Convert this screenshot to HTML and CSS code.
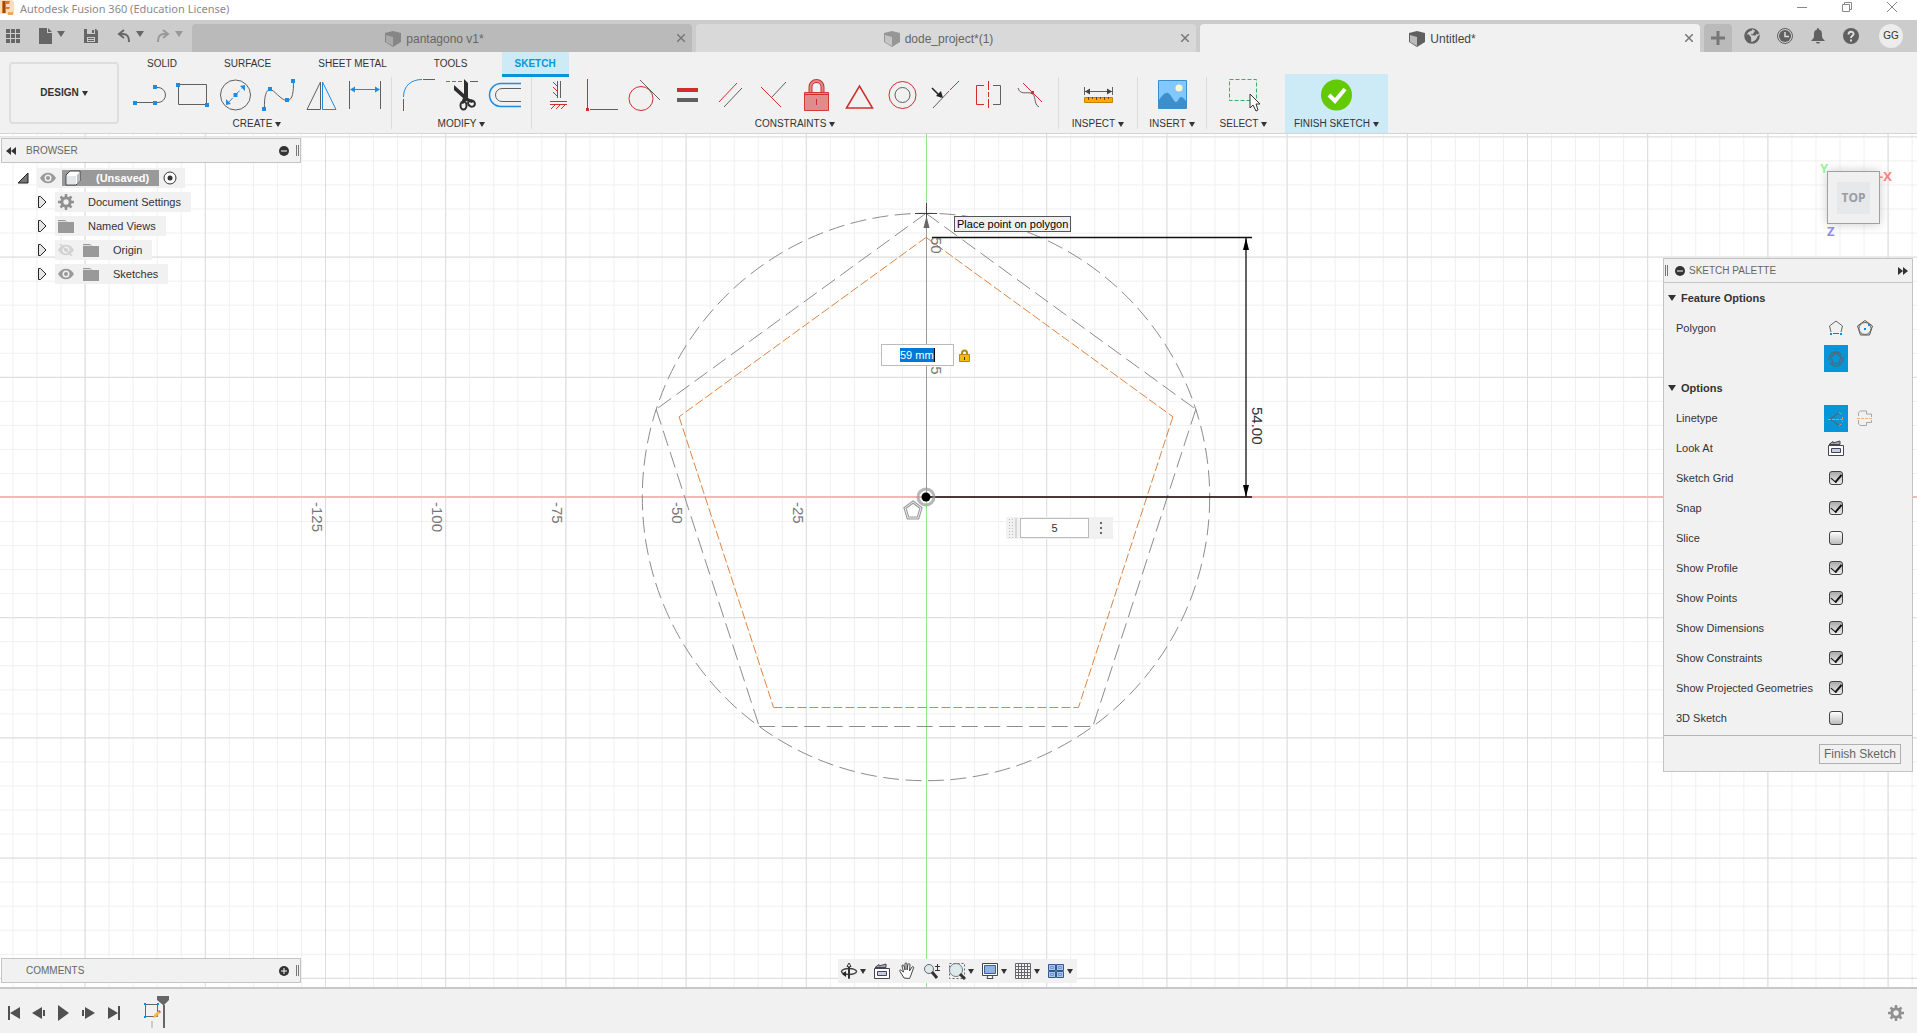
FILE: index.html
```html
<!DOCTYPE html>
<html lang="en">
<head>
<meta charset="utf-8">
<title>Autodesk Fusion 360 (Education License)</title>
<link rel="stylesheet" href="styles.css">
</head>
<body>
<div class="app">
  <header class="titlebar">
    <svg class="app-logo" viewBox="0 0 16 16" width="16" height="16"><path fill="#f8dcc0" d="M0 0h12l2 2v12H0z"/><path fill="#e07b1a" d="M2 1h8l-1 3H6v3h4l-1 2H6v4H2z"/><path fill="#9c4a0c" d="M3 1h2v12H3z"/><path fill="#f0a860" d="M8 12h5v3H8z"/></svg>
    <h1 class="app-title">Autodesk Fusion 360 (Education License)</h1>
    <div class="window-controls">
      <button type="button" aria-label="Minimize"><svg viewBox="0 0 12 12" width="12" height="12"><path class="wc" d="M1 6.500h10"/></svg></button>
      <button type="button" aria-label="Restore"><svg viewBox="0 0 12 12" width="12" height="12"><path class="wc" d="M1.500 3.500h7v7h-7zM3.500 3V1.500h7v7H9"/></svg></button>
      <button type="button" aria-label="Close"><svg viewBox="0 0 12 12" width="12" height="12"><path class="wc" d="M1 1l10 10M11 1L1 11"/></svg></button>
    </div>
  </header>

  <nav class="tabbar">
    <div class="quick">
      <button type="button" aria-label="Data panel"><svg viewBox="0 0 14 14" width="14" height="14"><path fill="#666" d="M0 0h4v4H0zM5 0h4v4H5zM10 0h4v4h-4zM0 5h4v4H0zM5 5h4v4H5zM10 5h4v4h-4zM0 10h4v4H0zM5 10h4v4H5zM10 10h4v4h-4z"/></svg></button>
      <button type="button" class="with-caret" aria-label="File"><svg viewBox="0 0 13 16" width="13" height="16"><path fill="#666" d="M0 0h8v5h5v11H0zM9 0l4 4H9z"/></svg><i class="caret"></i></button>
      <button type="button" aria-label="Save"><svg viewBox="0 0 14 14" width="14" height="14"><path fill="#666" d="M0 0h12l2 2v12H0z"/><path fill="#ccc" d="M3 0h8v5H3zM3 8h8v5H3z"/><path fill="#666" d="M8 1h2v3H8zM4 9h6v1H4zM4 11h6v1H4z"/></svg></button>
      <button type="button" class="with-caret" aria-label="Undo"><svg viewBox="0 0 14 14" width="14" height="14"><path fill="none" stroke="#666" stroke-width="2" d="M7 1L2 5l5 4M2 5h4c5 0 6 3 6 8"/></svg><i class="caret"></i></button>
      <button type="button" class="with-caret faded" aria-label="Redo"><svg viewBox="0 0 14 14" width="14" height="14"><path fill="none" stroke="#666" stroke-width="2" d="M7 1l5 4-5 4M12 5H8C3 5 2 8 2 13"/></svg><i class="caret"></i></button>
    </div>
    <div class="doctabs">
      <div class="doctab dark"><span class="doc-name"><svg viewBox="0 0 16 16" width="16" height="16"><path fill="#868686" d="M0 2l8-2 8 2v9l-8 5-8-5z"/><path fill="#aaa" d="M1 4l7 2v9l-7-4z"/></svg>pantagono v1*</span><button type="button" aria-label="Close pantagono v1"><svg viewBox="0 0 8 8" width="8" height="8"><path class="x" d="M0 0l8 8M8 0L0 8"/></svg></button></div>
      <div class="doctab light"><span class="doc-name"><svg viewBox="0 0 16 16" width="16" height="16"><path fill="#969696" d="M0 2l8-2 8 2v9l-8 5-8-5z"/><path fill="#c4c4c4" d="M1 4l7 2v9l-7-4z"/></svg>dode_project*(1)</span><button type="button" aria-label="Close dode_project"><svg viewBox="0 0 8 8" width="8" height="8"><path class="x" d="M0 0l8 8M8 0L0 8"/></svg></button></div>
      <div class="doctab current"><span class="doc-name"><svg viewBox="0 0 16 16" width="16" height="16"><path fill="#606060" d="M0 2l8-2 8 2v9l-8 5-8-5z"/><path fill="#bbb" d="M1 4l7 2v9l-7-4z"/></svg>Untitled*</span><button type="button" aria-label="Close Untitled"><svg viewBox="0 0 8 8" width="8" height="8"><path class="x" d="M0 0l8 8M8 0L0 8"/></svg></button></div>
      <button type="button" class="newtab" aria-label="New tab"><svg viewBox="0 0 14 14" width="14" height="14"><path stroke="#777" stroke-width="3" d="M7 0v14M0 7h14"/></svg></button>
    </div>
    <div class="account">
      <button type="button" aria-label="Extensions"><svg viewBox="0 0 16 16" width="16" height="16"><circle cx="8" cy="8" r="6.500" fill="none" stroke="#606060" stroke-width="2.500"/><path fill="#606060" d="M1 9l3-3 3 2 1 6-4 1zM7 7l3-5 4 2-3 4z"/><path fill="none" stroke="#ccc" stroke-width="1.500" d="M8 14V9l-2-2M9 8l3 1 3-3M8 6l2-3-2-1"/></svg></button>
      <button type="button" aria-label="Job status"><svg viewBox="0 0 16 16" width="16" height="16"><circle cx="8" cy="8" r="7.500" fill="none" stroke="#606060"/><circle cx="8" cy="8" r="6" fill="#606060"/><path fill="none" stroke="#ddd" stroke-width="1.500" d="M8 4v4.500h4"/></svg></button>
      <button type="button" aria-label="Notifications"><svg viewBox="0 0 16 16" width="16" height="16"><path fill="#606060" d="M8 0c1 0 1 1 1 1.500 3 1 3 3 3 6s1 3 3 5.500H1c2-2.500 3-2.500 3-5.500s0-5 3-6C7 1 7 0 8 0zM6 14h4c0 2-4 2-4 0z"/></svg></button>
      <button type="button" aria-label="Help"><svg viewBox="0 0 16 16" width="16" height="16"><circle cx="8" cy="8" r="8" fill="#606060"/><path fill="none" stroke="#ddd" stroke-width="2" d="M5.500 6.500C5.500 3 10.500 3 10.500 6 10.500 8 8 7.500 8 10M8 11.500v2"/></svg></button>
      <button type="button" class="avatar">GG</button>
    </div>
  </nav>

  <section class="ribbon">
    <button type="button" class="design">DESIGN<i class="caret small"></i></button>
    <div class="ribbon-main">
      <div class="ribbon-tabs">
        <button type="button">SOLID</button>
        <button type="button">SURFACE</button>
        <button type="button">SHEET METAL</button>
        <button type="button">TOOLS</button>
        <button type="button" class="active">SKETCH</button>
      </div>
      <div class="groups">
        <div class="group">
          <div class="tools">
            <button type="button" aria-label="Line"><svg class="tool" viewBox="0 0 43 36"><path class="g" d="M7 25.500h20M27 10.500h3a7.500 7.500 0 0 1 0 15h-3"/><path class="bf" d="M5 24h4v4H5zM25 24h4v4h-4zM25 8h4v4h-4z"/></svg></button>
            <button type="button" aria-label="Rectangle"><svg class="tool" viewBox="0 0 43 36"><path class="g" d="M7.500 7.500h28v20h-28z"/><path class="bf" d="M5 6h4v4H5zM34 26h4v4h-4z"/></svg></button>
            <button type="button" aria-label="Circle"><svg class="tool" viewBox="0 0 43 36"><circle class="g" cx="21.500" cy="18" r="15"/><path class="b" stroke-dasharray="7 3" d="M14 26L29 10"/><path class="bf" d="M12 28v-6l5 5zM31 8v6l-5-5zM19.500 16h4v4h-4z"/></svg></button>
            <button type="button" aria-label="Spline"><svg class="tool" viewBox="0 0 43 36"><path class="g" d="M7.500 32C7 20 9 12.500 13 12.500S24 23.500 30 23.500s6.500-9 6.500-20"/><path class="bf" d="M5 30h4v4H5zM11 10h4v4h-4zM28 21h4v4h-4zM34 2h4v4h-4z"/></svg></button>
            <button type="button" aria-label="Mirror"><svg class="tool" viewBox="0 0 43 36"><path class="g" d="M7 32.500L20.500 5v27.500z"/><path class="b" d="M22.500 5L36 32.500H22.500z"/></svg></button>
            <button type="button" aria-label="Sketch dimension"><svg class="tool" viewBox="0 0 43 36"><path class="g" d="M6.500 4v28M37.500 4v28"/><path class="b" d="M8 12.500h28"/><path class="bf" d="M7 12.500l5-3v6zM37 12.500l-5-3v6z"/></svg></button>
          </div>
          <button type="button" class="group-label">CREATE<i class="caret small"></i></button>
        </div>
        <div class="group">
          <div class="tools">
            <button type="button" aria-label="Fillet"><svg class="tool" viewBox="0 0 43 36"><path class="g" d="M6.500 34V22M26 2.500h12"/><path class="b" d="M6.500 20C6.500 9 14 2.500 25 2.500"/></svg></button>
            <button type="button" aria-label="Trim"><svg class="tool" viewBox="0 0 43 36"><path class="b" stroke-dasharray="4 2" d="M6 4.500h17"/><path class="g" d="M30 4.500h8"/><path fill="#2e2e2e" d="M24 2l4 4v15l6 3-2 2-6-2-3 3-2-1 2-5-9-8V8l10 9z"/><ellipse cx="23.500" cy="28.500" rx="3" ry="4" fill="none" stroke="#2e2e2e" stroke-width="2"/><ellipse cx="31.500" cy="26.500" rx="3.500" ry="3" transform="rotate(30 31.500 26.500)" fill="none" stroke="#2e2e2e" stroke-width="2"/></svg></button>
            <button type="button" aria-label="Offset"><svg class="tool" viewBox="0 0 43 36"><path class="b" stroke-width="1.500" d="M38 6.500H18a11.500 11.500 0 0 0 0 23h20"/><path class="g" d="M38 11.500H19a6.500 6.500 0 0 0 0 13h19"/></svg></button>
          </div>
          <button type="button" class="group-label">MODIFY<i class="caret small"></i></button>
        </div>
        <div class="group">
          <div class="tools">
            <button type="button" aria-label="Horizontal/Vertical"><svg class="tool" viewBox="0 0 43 36"><path class="g" d="M23.500 4v17M13 24.500h17"/><path class="r" d="M20.500 4v17M20 9l-4-4M20 14l-4-4M20 19l-4-4M13 27.500h17M18 28l-4 4M23 28l-4 4M28 28l-4 4"/></svg></button>
            <button type="button" aria-label="Coincident"><svg class="tool" viewBox="0 0 43 36"><path class="r" d="M7.500 2v29"/><path class="g" d="M10 32.500h28"/><path class="rf" d="M6 31h3v3H6z"/></svg></button>
            <button type="button" aria-label="Tangent"><svg class="tool" viewBox="0 0 43 36"><circle class="r" cx="18" cy="21.500" r="12"/><path class="g" d="M17 3l20 20"/></svg></button>
            <button type="button" aria-label="Equal"><svg class="tool" viewBox="0 0 43 36"><path class="rf" d="M11 11h21v4H11z"/><path fill="#606060" d="M11 21h21v4H11z"/></svg></button>
            <button type="button" aria-label="Parallel"><svg class="tool" viewBox="0 0 43 36"><path class="r" d="M10 25L28 6"/><path class="g" d="M15 30l18-19"/></svg></button>
            <button type="button" aria-label="Perpendicular"><svg class="tool" viewBox="0 0 43 36"><path class="g" d="M20 20L34 5"/><path class="r" d="M9 10l20 20"/></svg></button>
            <button type="button" aria-label="Fix/Unfix"><svg class="tool" viewBox="0 0 43 36"><path fill="none" stroke="#c83030" stroke-width="4" d="M15.500 16v-6a6 6 0 0 1 12 0v6"/><path fill="none" stroke="#e08c8c" stroke-width="2" d="M15.500 16v-6a6 6 0 0 1 12 0v6"/><path fill="#e08c8c" stroke="#d03a3a" d="M9.500 15.500h24v18h-24z"/><path class="r" d="M9 17.500h25M21.500 22v6"/></svg></button>
            <button type="button" aria-label="Midpoint"><svg class="tool" viewBox="0 0 43 36"><path class="r" stroke-width="1.500" d="M8.500 31L21.500 9l13 22z"/></svg></button>
            <button type="button" aria-label="Concentric"><svg class="tool" viewBox="0 0 43 36"><circle class="r" cx="21.500" cy="18" r="13.500"/><circle class="g" cx="21.500" cy="18" r="7.500"/></svg></button>
            <button type="button" aria-label="Collinear"><svg class="tool" viewBox="0 0 43 36"><path class="g" d="M9 31l16-17"/><path class="r" d="M26 13l9-9"/><path fill="none" stroke="#222" stroke-width="1.500" d="M8 11l9 9"/><path fill="#222" d="M19 21l-7-2 5-5z"/></svg></button>
            <button type="button" aria-label="Symmetry"><svg class="tool" viewBox="0 0 43 36"><path class="r" d="M17 8.500H9.500v19H17"/><path class="r" stroke-dasharray="9 2 5 2" d="M21.500 4v28"/><path class="g" d="M26 8.500h7.500v19H26"/></svg></button>
            <button type="button" aria-label="Curvature"><svg class="tool" viewBox="0 0 43 36"><path class="g" d="M8 11c2 7 8 4 13 5 6 2 2 11 8 14"/><path class="r" d="M13 6l19 19"/><path class="rf" d="M21 14h3v3h-3z"/></svg></button>
          </div>
          <button type="button" class="group-label">CONSTRAINTS<i class="caret small"></i></button>
        </div>
        <div class="group inspect">
          <div class="tools"><button type="button" aria-label="Measure"><svg class="tool" viewBox="0 0 43 36"><path class="g" d="M7.500 10v8M35.500 10v8M8 14.500h27"/><path fill="#444" d="M8 14.500l5-3v6zM35 14.500l-5-3v6z"/><path fill="#ffa800" stroke="#c88400" d="M7.500 20.500h28v5h-28z"/><path stroke="#6b4a10" d="M11.500 20v3M15.500 20v2M19.500 20v3M23.500 20v2M27.500 20v3M31.500 20v2"/></svg></button></div>
          <button type="button" class="group-label">INSPECT<i class="caret small"></i></button>
        </div>
        <div class="group insert">
          <div class="tools"><button type="button" aria-label="Insert image"><svg class="tool" viewBox="0 0 43 36"><path fill="#80c8ff" stroke="#3c8cc8" d="M7.500 3.500h28v28h-28z"/><path fill="#3c8fcb" d="M8 23c3-4 6-8 9-7s6 9 8 9 3-5 5-5 3 2 5 4v8H8z"/><circle cx="28" cy="11" r="3.500" fill="#fff7cc"/></svg></button></div>
          <button type="button" class="group-label">INSERT<i class="caret small"></i></button>
        </div>
        <div class="group select">
          <div class="tools"><button type="button" aria-label="Select"><svg class="tool" viewBox="0 0 43 36"><path fill="none" stroke="#2eb464" stroke-dasharray="4 2" d="M7.500 2.500h27v21h-27z"/><path fill="#fff" stroke="#333" d="M28 17v14l3-3 3 6 2-1-2-6h4z"/></svg></button></div>
          <button type="button" class="group-label">SELECT<i class="caret small"></i></button>
        </div>
        <div class="group finish">
          <div class="tools"><button type="button" aria-label="Finish"><svg class="tool" viewBox="0 0 43 36"><circle cx="21.500" cy="18" r="15.500" fill="#63c900"/><path fill="none" stroke="#fff" stroke-width="4" d="M14 18l6 6 10-12"/></svg></button></div>
          <button type="button" class="group-label">FINISH SKETCH<i class="caret small"></i></button>
        </div>
      </div>
    </div>
  </section>

  <main class="viewport">
    <svg class="drawing" width="100%" height="100%">
      <defs>
        <pattern id="minor" width="24.040" height="24.040" patternUnits="userSpaceOnUse"><path fill="none" stroke="#efefef" d="M.5 0v24.040M0 .5h24.040"/></pattern>
        <pattern id="major" width="120.200" height="120.200" patternUnits="userSpaceOnUse"><path fill="none" stroke="#dcdcdc" d="M.5 0v120.200M0 .5h120.200"/></pattern>
      </defs>
      <svg x="926" y="363" overflow="visible">
        <rect x="-961.600" y="-480.800" width="6000" height="4000" fill="url(#minor)"/>
        <rect x="-961.600" y="-480.800" width="6000" height="4000" fill="url(#major)"/>
        <path stroke="#f4b6b6" stroke-width="2" d="M-926 0H5000"/>
        <path stroke="#92e692" d="M.5-363V4000"/>
        <g class="construction">
          <circle r="283.700" stroke-dasharray="16 6.500"/>
          <path stroke-dasharray="16 6.500" d="M0-283.700L269.800-87.700M0-283.700L-269.800-87.700M269.800-87.700L166.800 229.500M-269.800-87.700L-166.800 229.500M-166.800 229.500H166.800"/>
        </g>
        <path class="inner" d="M0-259.600L-246.900-80.200M0-259.600L246.900-80.200M246.900-80.200L152.600 210M-246.900-80.200L-152.600 210M-152.600 210.500H152.600"/>
        <path stroke="#999" d="M.5-283V0"/>
        <path stroke="#444" d="M.5-294v22M-11-283.500h22"/>
        <path fill="#666" d="M.5-281l3 12h-6z"/>
        <path stroke="#111" stroke-width="1.300" d="M6-259.500h320M0 0h326M320-259V0"/>
        <path fill="#000" d="M320-259l3 12h-6zM320 0l3-12h-6z"/>
        <g class="ruler">
          <text transform="translate(-133 5) rotate(90)">-25</text>
          <text transform="translate(-254 5) rotate(90)">-50</text>
          <text transform="translate(-374 5) rotate(90)">-75</text>
          <text transform="translate(-494 5) rotate(90)">-100</text>
          <text transform="translate(-614 5) rotate(90)">-125</text>
          <text transform="translate(5 -260) rotate(90)">50</text>
          <text transform="translate(5 -139) rotate(90)">25</text>
          <text class="dim" transform="translate(326 -90) rotate(90)">54.00</text>
        </g>
        <circle r="8" fill="none" stroke="#999" stroke-opacity=".7" stroke-width="3"/>
        <circle r="4.500" fill="#000"/>
        <path fill="none" stroke="#999" stroke-width="3" d="M-13 5l8 6-3 10h-10l-3-10z"/><path fill="none" stroke="#eee" d="M-13 5l8 6-3 10h-10l-3-10z"/>
      </svg>
    </svg>

    <div class="tooltip" role="tooltip">Place point on polygon</div>
    <div class="radius-entry">
      <label class="radius-box"><input type="text" class="bare" aria-label="Radius" value="59 mm"></label>
      <svg viewBox="0 0 11 13" width="11" height="13"><path fill="none" stroke="#b58a10" stroke-width="2" d="M3 6V4a2.500 2.500 0 0 1 5 0v2"/><path fill="#f0bc10" stroke="#b58a10" d="M.5 5.500h10v7H.5z"/><path fill="#403000" d="M5 8h1v3H5z"/></svg>
    </div>
    <div class="sides-entry">
      <span class="grip"></span>
      <input type="text" aria-label="Number of sides" value="5">
      <button type="button" aria-label="More"><i></i><i></i><i></i></button>
    </div>

    <div class="overlay">
      <div class="left-dock">
        <section class="browser">
          <div class="panel-head">
            <svg viewBox="0 0 11 8" width="11" height="8"><path fill="#333" d="M5 0v8L0 4zM10 0v8L5 4z"/></svg>
            <h2>BROWSER</h2>
            <button type="button" aria-label="Collapse"><svg viewBox="0 0 10 10" width="10" height="10"><circle cx="5" cy="5" r="5" fill="#333"/><path stroke="#fff" d="M2 5h6"/></svg></button>
            <span class="handle"></span>
          </div>
          <ul class="tree">
            <li class="root"><svg viewBox="0 0 12 12" width="12" height="12"><path fill="#777" stroke="#222" d="M11 1v10H1z"/></svg>
              <span class="node"><svg viewBox="0 0 16 12" width="16" height="12"><use href="#eye"/></svg><span class="chosen"><svg viewBox="0 0 16 16" width="16" height="16"><path fill="#fff" stroke="#444" d="M1 5l4-4h10v10l-4 4H1z"/><path fill="#e4e6ea" d="M2 6h9v8H2z"/><path fill="#b8bcc4" d="M12 5l3-3v9l-3 3z"/></svg><b>(Unsaved)</b></span><svg viewBox="0 0 14 14" width="14" height="14"><circle cx="7" cy="7" r="6" fill="#fff" stroke="#333"/><circle cx="7" cy="7" r="2.500" fill="#333"/></svg></span></li>
            <li><svg class="expand" viewBox="0 0 10 14" width="10" height="14"><use href="#tri"/></svg><span class="node"><svg viewBox="0 0 16 16" width="16" height="16"><use href="#gear"/></svg><span class="name">Document Settings</span></span></li>
            <li><svg class="expand" viewBox="0 0 10 14" width="10" height="14"><use href="#tri"/></svg><span class="node"><svg viewBox="0 0 16 14" width="16" height="14"><use href="#folder"/></svg><span class="name">Named Views</span></span></li>
            <li><svg class="expand" viewBox="0 0 10 14" width="10" height="14"><use href="#tri"/></svg><span class="node"><svg class="hidden-eye" viewBox="0 0 16 12" width="16" height="12"><use href="#eye"/><path stroke="#999" stroke-width="1.500" d="M2 0l12 12"/></svg><svg viewBox="0 0 16 14" width="16" height="14"><use href="#folder"/></svg><span class="name">Origin</span></span></li>
            <li><svg class="expand" viewBox="0 0 10 14" width="10" height="14"><use href="#tri"/></svg><span class="node"><svg viewBox="0 0 16 12" width="16" height="12"><use href="#eye"/></svg><svg viewBox="0 0 16 14" width="16" height="14"><use href="#folder"/></svg><span class="name">Sketches</span></span></li>
          </ul>
        </section>
        <section class="comments panel-head">
          <h2>COMMENTS</h2>
          <button type="button" aria-label="Expand"><svg viewBox="0 0 10 10" width="10" height="10"><circle cx="5" cy="5" r="5" fill="#333"/><path stroke="#fff" d="M2 5h6M5 2v6"/></svg></button>
          <span class="handle"></span>
        </section>
      </div>

      <div class="navbar">
        <button type="button" aria-label="Orbit"><svg viewBox="0 0 18 18" width="18" height="18"><ellipse cx="9" cy="9.500" rx="7.500" ry="3" fill="none" stroke="#444" stroke-width="1.500"/><path fill="#fff" stroke="#333" d="M8.500 16.500V4.500H7L9 1l2 3.500h-1.500v12z"/><path fill="#222" d="M6 9v6l-4-3z"/></svg><i class="caret small"></i></button>
        <button type="button" aria-label="Look at"><svg viewBox="0 0 18 18" width="18" height="18"><use href="#look"/></svg></button>
        <button type="button" aria-label="Pan"><svg viewBox="0 0 18 18" width="18" height="18"><path fill="#fff" stroke="#444" d="M6 16L2 9.500c-1-2 1-2 2-.5l1.500 1L4 4c0-1.500 1.500-1.500 2 0l1 4V2c0-1.500 2-1.500 2 0v6l1-5.500c.5-1.500 2-1 2 .5L11.500 9 14 5c1-1 2 0 1.500 1L13 13l-1.500 3.500z"/></svg></button>
        <button type="button" aria-label="Zoom"><svg viewBox="0 0 18 18" width="18" height="18"><circle cx="6" cy="7" r="4.500" fill="#dceaec" stroke="#667"/><path stroke="#333" stroke-width="3" d="M9 10l5 6"/><path stroke="#333" d="M14.500 2v6M12 4.500h5M12 8.500h5"/></svg></button>
        <button type="button" aria-label="Fit"><svg viewBox="0 0 18 18" width="18" height="18"><path fill="none" stroke="#666" stroke-dasharray="2 2" d="M1.500 1.500h15v15h-15z"/><circle cx="8" cy="8" r="6.500" fill="#dceaec" stroke="#778"/><path stroke="#333" stroke-width="3" d="M12 12l5 5"/></svg><i class="caret small"></i></button>
        <button type="button" aria-label="Display settings"><svg viewBox="0 0 18 18" width="18" height="18"><path fill="#fff" stroke="#445" d="M1.500 1.500h15v12h-15zM6 16.500h6l-1-3H7z"/><path fill="#8fb4e4" stroke="#3c6090" d="M3.500 3.500h11v8h-11z"/></svg><i class="caret small"></i></button>
        <button type="button" aria-label="Grid and snaps"><svg viewBox="0 0 18 18" width="18" height="18"><path fill="#f4f4f8" stroke="#666" d="M1.500 1.500h15v15h-15zM4.500 1v16M7.500 1v16M10.500 1v16M13.500 1v16M1 4.500h16M1 7.500h16M1 10.500h16M1 13.500h16"/></svg><i class="caret small"></i></button>
        <button type="button" aria-label="Viewports"><svg viewBox="0 0 18 18" width="18" height="18"><path fill="#a9c8ee" stroke="#34568c" d="M1.500 2.500h7v6h-7zM9.500 2.500h7v6h-7zM1.500 9.500h7v6h-7zM9.500 9.500h7v6h-7z"/><path fill="none" stroke="#6f94c8" d="M3.500 4.500h3v2h-3zM11.500 4.500h3v2h-3zM3.500 11.500h3v2h-3zM11.500 11.500h3v2h-3z"/></svg><i class="caret small"></i></button>
      </div>

      <div class="right-dock">
        <div class="cube">
          <span class="axis y">Y</span><span class="axis x-axis">-X</span><span class="axis z">Z</span>
          <button type="button" class="face"><span>TOP</span></button>
        </div>
        <form class="palette">
          <div class="palette-head">
            <span class="handle"></span>
            <svg viewBox="0 0 10 10" width="10" height="10"><circle cx="5" cy="5" r="5" fill="#333"/><path stroke="#fff" d="M2 5h6"/></svg>
            <h2>SKETCH PALETTE</h2>
            <svg viewBox="0 0 11 8" width="11" height="8"><path fill="#333" d="M1 0v8l5-4zM6 0v8l5-4z"/></svg>
          </div>
          <div class="rows">
            <h3><i class="caret big"></i>Feature Options</h3>
            <div class="row tall"><span>Polygon</span><span class="options">
              <button type="button" aria-label="Edge polygon"><svg viewBox="0 0 16 16" width="16" height="16"><path fill="none" stroke="#666" d="M3 12L1.500 6 8 1l6.500 5L13 12M5 13.500h6"/><path fill="#0c8ee0" d="M2 13h2v2H2zM12 13h2v2h-2z"/></svg></button>
              <button type="button" aria-label="Inscribed polygon"><svg viewBox="0 0 16 16" width="16" height="16"><path fill="none" stroke="#555" d="M3.500 15L.5 6 8 .500 15.500 6l-3 9z"/><circle cx="8" cy="8.500" r="6" fill="none" stroke="#666"/><path fill="#0c8ee0" d="M7 8h2v2H7zM11 4h2v2h-2z"/></svg></button>
              <button type="button" class="on" aria-label="Circumscribed polygon"><svg viewBox="0 0 16 16" width="16" height="16"><circle cx="8" cy="8" r="7" fill="none" stroke="#4f6b80" stroke-width="1.500" stroke-dasharray="18 3"/><path fill="none" stroke="#4f6b80" stroke-width="1.500" d="M5 12.500L3 6l5-4 5 4-2 6.500z"/></svg></button>
            </span></div>
            <h3><i class="caret big"></i>Options</h3>
            <div class="row"><span>Linetype</span><span class="options">
              <button type="button" class="on" aria-label="Construction"><svg viewBox="0 0 16 16" width="16" height="16"><path fill="none" stroke="#4f6b80" stroke-width="1.500" d="M12 1L2 8l10 7"/><path stroke="#f08a3c" stroke-dasharray="3 1" d="M0 8.500h16M11 1l3 3M11 15l3-3M14.500 6v5"/></svg></button>
              <button type="button" class="faint" aria-label="Centerline"><svg viewBox="0 0 16 16" width="16" height="16"><path fill="none" stroke="#777" d="M1.500 6V2.500l2-1.500h6v3h5v3M1.500 10v4l2 1.500h6v-3h5V10"/><path stroke="#f08a3c" stroke-dasharray="3 1" d="M0 8.500h16"/></svg></button>
            </span></div>
            <div class="row"><span>Look At</span><span class="options"><button type="button" aria-label="Look at sketch"><svg viewBox="0 0 18 18" width="18" height="18"><use href="#look"/></svg></button></span></div>
            <label class="row"><span>Sketch Grid</span><input type="checkbox" checked></label>
            <label class="row"><span>Snap</span><input type="checkbox" checked></label>
            <label class="row"><span>Slice</span><input type="checkbox"></label>
            <label class="row"><span>Show Profile</span><input type="checkbox" checked></label>
            <label class="row"><span>Show Points</span><input type="checkbox" checked></label>
            <label class="row"><span>Show Dimensions</span><input type="checkbox" checked></label>
            <label class="row"><span>Show Constraints</span><input type="checkbox" checked></label>
            <label class="row"><span>Show Projected Geometries</span><input type="checkbox" checked></label>
            <label class="row"><span>3D Sketch</span><input type="checkbox"></label>
          </div>
          <div class="palette-foot"><button type="button">Finish Sketch</button></div>
        </form>
      </div>
    </div>
  </main>

  <footer class="timeline">
    <button type="button" aria-label="Go to start"><svg viewBox="0 0 14 14" width="14" height="14"><path fill="#505050" d="M1 0h2v14H1zM13 1v12L3 7z"/></svg></button>
    <button type="button" aria-label="Step back"><svg viewBox="0 0 14 14" width="14" height="14"><path fill="#505050" d="M10 1v12L0 7zM11 4h2v6h-2z"/></svg></button>
    <button type="button" aria-label="Play"><svg viewBox="0 0 14 16" width="14" height="16"><path fill="#505050" d="M1 0v16l11-8z"/></svg></button>
    <button type="button" aria-label="Step forward"><svg viewBox="0 0 14 14" width="14" height="14"><path fill="#505050" d="M3 1v12l10-6zM0 4h2v6H0z"/></svg></button>
    <button type="button" aria-label="Go to end"><svg viewBox="0 0 14 14" width="14" height="14"><path fill="#505050" d="M11 0h2v14h-2zM1 1v12l10-6z"/></svg></button>
    <svg class="feature" viewBox="0 0 28 34" width="28" height="34"><path fill="none" stroke="#666" d="M2.500 8.500h12v12h-12z"/><path fill="#0c8ee0" d="M1 7h2v2H1zM1 20h2v2H1zM14 7h2v2h-2z"/><path fill="#f8b840" d="M10 22l1-3 4-4 2 2-4 4z"/><path fill="#e84848" d="M15 15l1-1 2 2-1 1z"/><path fill="#ccc" d="M8 25h2v7H8z"/><path fill="#666" d="M14 0h12v4l-5 5h1v23h-2V9l-6-5z"/></svg>
    <button type="button" class="prefs" aria-label="Timeline settings"><svg viewBox="0 0 16 16" width="16" height="16"><use href="#gear"/></svg></button>
  </footer>
</div>

<svg class="symbols" width="0" height="0" aria-hidden="true">
  <symbol id="eye" viewBox="0 0 16 12" width="16" height="12"><path fill="#999" d="M0 6c4-7 12-7 16 0-4 7-12 7-16 0z"/><circle cx="8" cy="6" r="3.500" fill="#f1f1f1"/><circle cx="8" cy="6" r="2" fill="#999"/></symbol>
  <symbol id="folder" viewBox="0 0 16 14" width="16" height="14"><path fill="#999" d="M0 1h7l2 2h7v11H0z"/><path stroke="#ddd" d="M0 2.500h8"/></symbol>
  <symbol id="tri" viewBox="0 0 10 14" width="10" height="14"><path fill="#e6e6e6" stroke="#222" d="M1.500 1.500h2L9 7l-5.500 5.500h-2z"/></symbol>
  <symbol id="gear" viewBox="0 0 16 16" width="16" height="16"><circle cx="8" cy="8" r="4.200" fill="none" stroke="#909090" stroke-width="3"/><path stroke="#909090" stroke-width="2.500" d="M8 0v3M8 13v3M0 8h3M13 8h3M2.500 2.500l2 2M11.500 11.500l2 2M13.500 2.500l-2 2M4.500 11.500l-2 2"/></symbol>
  <symbol id="look" viewBox="0 0 18 18" width="18" height="18"><path fill="#fff" stroke="#445" d="M1.500 6.500h15v10h-15z"/><path fill="#c8cce0" stroke="#445" d="M4.500 9.500h9v4h-9z"/><path fill="#aaa" stroke="#445" d="M2 5.500l4-3v1.500l7-2v3.500z"/></symbol>
</svg>
</body>
</html>
```

FILE: styles.css
```css
* { box-sizing: border-box; }

body {
  margin: 0;
  font: 11px/16px "Liberation Sans", Arial, sans-serif;
  color: #333;
}

h1, h2, h3, ul { margin: 0; padding: 0; font-weight: normal; font-size: inherit; list-style: none; }
svg { display: block; flex: none; }
button {
  display: flex; align-items: center; justify-content: center;
  margin: 0; padding: 0; border: 0; background: none;
  font: inherit; color: inherit;
}
.symbols { position: absolute; }

.app { display: flex; flex-direction: column; height: 100vh; overflow: hidden; background: #fff; }

.caret {
  flex: none; width: 0; height: 0;
  border: solid transparent; border-width: 6px 4px 0; border-top-color: #666;
}
.caret.small { border-width: 5px 3px 0; border-top-color: #333; margin-left: 3px; }
.caret.big { border-width: 6px 4px 0; border-top-color: #333; margin-right: 5px; }

/* title bar */
.titlebar { display: flex; align-items: flex-start; height: 20px; flex: none; }
.app-title { flex: 1; margin-left: 4px; font: 11px/18px "Noto Sans", "Open Sans", sans-serif; color: #8a8a8a; }
.window-controls { display: flex; gap: 33px; padding: 1px 19px 0 0; }
.wc { fill: none; stroke: #888; }

/* document tabs */
.tabbar { display: flex; height: 32px; flex: none; background: #ccc; }
.quick { display: flex; align-items: center; width: 192px; padding-left: 6px; gap: 19px; }
.quick .with-caret { gap: 5px; }
.quick .with-caret + .with-caret { margin-left: -7px; }
.quick .caret { margin-top: -4px; }
.faded { opacity: .5; }
.doctabs { display: flex; flex: 1; gap: 4px; padding-top: 4px; }
.doctab { flex: 1; display: flex; align-items: center; padding-right: 7px; border-radius: 4px 4px 0 0; font-size: 12px; color: #666; }
.doctab.dark { background: #bababa; }
.doctab.light { background: #d9d9d9; }
.doctab.current { background: #f1f1f1; color: #444; }
.doc-name { flex: 1; display: flex; align-items: center; justify-content: center; gap: 5px; padding-top: 2px; }
.x { stroke: #777; stroke-width: 1.5; }
.newtab { width: 28px; background: #bababa; border-radius: 4px 4px 0 0; }
.account { display: flex; align-items: center; gap: 17px; width: 185px; padding-left: 12px; }
.avatar { width: 24px; height: 24px; border-radius: 12px; background: #ececec; font-size: 10px; margin-left: 3px; }

/* ribbon */
.ribbon { display: flex; flex: none; height: 82px; background: #f1f1f1; border-bottom: 1px solid #d4d4d4; }
.design { flex: none; width: 110px; margin: 10px 4px 9px 9px; border: 2px solid #dedede; border-radius: 4px; font: bold 10px/16px "Liberation Sans", Arial, sans-serif; }
.ribbon-main { flex: 1; display: flex; flex-direction: column; }
.ribbon-tabs { display: flex; flex: none; height: 25px; gap: 21px; padding-left: 11px; font-size: 10px; }
.ribbon-tabs button { padding: 0 13px 2px; }
.ribbon-tabs .active { background: #cdeaf7; color: #0696d7; font-weight: bold; border-bottom: 3px solid #0696d7; padding: 1px 13px 0; }
.groups { display: flex; flex: 1; }
.group { position: relative; display: flex; flex-direction: column; align-items: center; padding: 0 5px; border-right: 1px solid #dcdcdc; border-image: linear-gradient(#dcdcdc 92%, transparent 92%) 1; }
.group.finish, .group.select { border: 0; }
.inspect { width: 79px; }
.insert { width: 69px; }
.select { width: 73px; }
.finish { width: 103px; margin: -3px 0 0 5px; padding-top: 3px; background: #cdeaf7; }
.tools { display: flex; }
.tool { width: 43px; height: 36px; }
.group-label { height: 20px; padding-top: 2px; font-size: 10px; white-space: nowrap; }
.g { fill: none; stroke: #606060; }
.b { fill: none; stroke: #1c8ce4; }
.r { fill: none; stroke: #d42c2c; }
.bf { fill: #1c8ce4; }
.rf { fill: #d42c2c; }

/* modelling canvas */
.viewport { position: relative; flex: 1; min-height: 0; overflow: hidden; background: #fff; }
.drawing { position: absolute; inset: 0; }
.construction { fill: none; stroke: #8c8c8c; }
.inner { fill: none; stroke: #de8440; stroke-dasharray: 9 3; }
.ruler { font-size: 15px; fill: #777; }
.ruler .dim { fill: #333; }

.tooltip { position: absolute; left: 954px; top: 82px; padding: 0 2px; border: 1px solid #555; background: #f0f0f0; font-size: 11px; line-height: 14px; color: #000; }
.radius-entry { position: absolute; left: 881px; top: 210px; display: flex; align-items: center; gap: 5px; }
.radius-box { display: flex; align-items: center; justify-content: center; width: 73px; height: 22px; background: #fff; border: 1px solid #bbb; }
.bare { width: 35px; height: 14px; padding: 0; border: 0; border-right: 1px solid #000; background: #0078d7; color: #fff; font: 11px/14px "Liberation Sans", Arial, sans-serif; }
.sides-entry { position: absolute; left: 1006px; top: 383px; display: flex; align-items: center; height: 22px; background: #f1f1f1; }
.grip { width: 9px; height: 20px; margin: 0 3px 0 2px; border-right: 2px solid #d8d8d8; background: radial-gradient(circle, #bbb 30%, transparent 40%) 0 0 / 3px 3px; }
.sides-entry input { width: 69px; height: 20px; padding: 0; border: 1px solid #bbb; background: #fff; text-align: center; font: 11px/16px "Liberation Sans", Arial, sans-serif; color: #333; }
.sides-entry button { flex-direction: column; gap: 3px; width: 24px; }
.sides-entry i { width: 2px; height: 2px; background: #666; }

.overlay { position: relative; height: 100%; display: grid; grid-template-columns: 1fr auto 1fr; padding: 4px 4px 4px 1px; }
.left-dock { display: flex; flex-direction: column; justify-content: space-between; align-items: flex-start; }
.panel-head { display: flex; align-items: center; width: 300px; height: 25px; border: 1px solid #c4c4c4; background: #f1f1f1; padding: 0 1px 0 4px; color: #666; }
.panel-head h2 { flex: 1; margin-left: 9px; font-size: 10px; }
.comments h2 { margin-left: 20px; }
.handle { width: 3px; height: 11px; border: solid #777; border-width: 0 1px; }
.panel-head .handle { margin-left: 7px; }
.tree { display: flex; flex-direction: column; gap: 4px; padding-top: 5px; }
.tree li { display: flex; align-items: center; height: 20px; padding-left: 36px; gap: 8px; }
.tree .root { padding-left: 16px; gap: 8px; }
.node { display: flex; align-items: center; height: 20px; padding: 0 10px 0 3px; gap: 9px; background: #f1f1f1; }
.root .node { padding: 0 8px 0 3px; gap: 6px; }
.root .chosen { margin-right: -2px; }
.chosen { display: flex; align-items: center; gap: 15px; height: 16px; padding: 0 10px 0 3px; background: #999; color: #fff; }
.name { margin-left: 5px; }
.hidden-eye { opacity: .35; }

.navbar { align-self: end; display: flex; align-items: center; gap: 7px; height: 24px; padding: 0 4px 0 2px; background: #f1f1f1; }
.navbar .caret { margin-left: 2px; }

.right-dock { display: flex; flex-direction: column; align-items: flex-end; }
.cube { position: relative; width: 90px; height: 120px; padding: 33px 0 0 4px; }
.face { width: 53px; height: 53px; border: 1px solid #a0a0a0; background: #f0f0f0; box-shadow: 0 0 10px #ccc; font: bold 12px/16px "Open Sans", sans-serif; color: #999ca2; }
.face span { padding: 8px 4px; background: #e6e8ea; }
.axis { position: absolute; font: bold 13px/14px "Open Sans", sans-serif; }
.axis.y { left: -3px; top: 23px; color: #98f098; }
.x-axis { left: 56px; top: 31px; color: #f88080; }
.z { left: 4px; top: 86px; color: #8c8cf4; }

.palette { width: 250px; border: 1px solid #c4c4c4; background: #f1f1f1; }
.palette-head { display: flex; align-items: center; height: 24px; padding: 0 4px 0 1px; border-bottom: 1px solid #c4c4c4; color: #666; }
.palette-head h2 { flex: 1; margin-left: 4px; font-size: 10px; }
.palette-head .handle { margin-right: 7px; }
.rows { padding-bottom: 2px; }
.rows h3 { display: flex; align-items: center; height: 30px; padding-left: 4px; font-weight: bold; }
.row { display: flex; align-items: center; height: 30px; padding-left: 12px; }
.row > span:first-child { width: 148px; }
.tall { height: 60px; align-items: flex-start; }
.tall > span:first-child { line-height: 30px; }
.options { display: flex; flex-wrap: wrap; width: 64px; column-gap: 5px; }
.options button { width: 24px; height: 30px; }
.options .on { background: #0696d7 content-box; padding: 2px 0 1px; }
.faint { opacity: .6; }
.row input { appearance: none; display: grid; place-items: center; width: 14px; height: 14px; margin: 0 0 0 5px; border: 1px solid #444; border-radius: 3px; background: linear-gradient(#fff, #bbb); }
.row input:checked { background: linear-gradient(#aaa, #eee); }
.row input:checked::before { content: ""; width: 5px; height: 9px; margin-top: -2px; border: solid #111; border-width: 0 2px 1px 0; transform: rotate(40deg); }
.palette-foot { display: flex; justify-content: flex-end; padding: 8px 11px 7px; border-top: 1px solid #b4b4b4; }
.palette-foot button { width: 82px; height: 20px; border: 1px solid #b0b0b0; font-size: 12px; color: #666; }

/* timeline */
.timeline { display: flex; align-items: center; flex: none; height: 46px; padding: 4px 13px 0 7px; gap: 11px; background: #f1f1f1; border-top: 2px solid #c8c8c8; }
.feature { margin-left: 11px; }
.prefs { margin-left: auto; }
```
